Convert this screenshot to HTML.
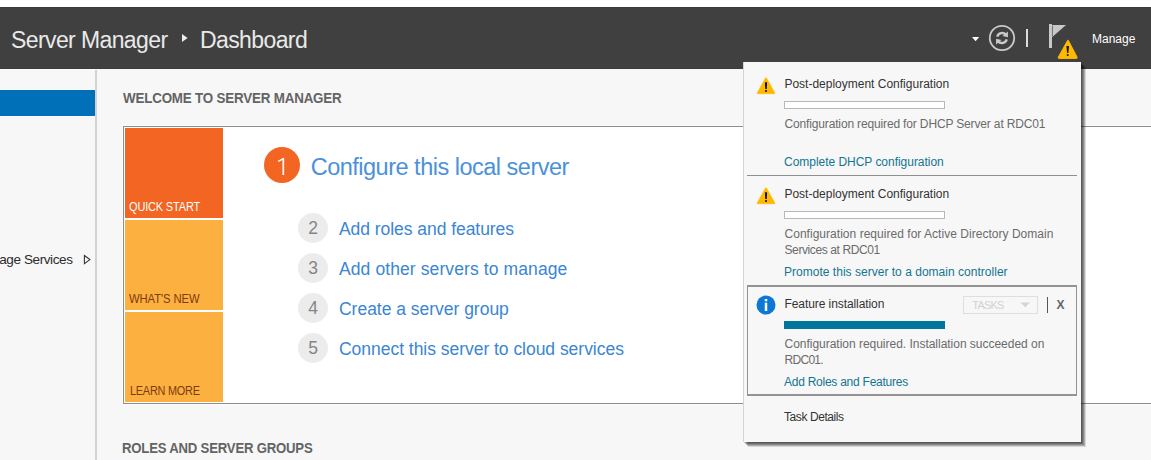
<!DOCTYPE html>
<html><head><meta charset="utf-8"><style>
html,body{margin:0;padding:0;width:1151px;height:460px;overflow:hidden;background:#ffffff;}
body{position:relative;font-family:"Liberation Sans", sans-serif;}
.t{position:absolute;white-space:nowrap;}
.b{position:absolute;}
</style></head><body>
<div class="b" style="left:0px;top:7px;width:1151px;height:62px;background:#404040;"></div>
<div class="b" style="left:0px;top:7px;width:1151px;height:1px;background:#3b3b3b;"></div>
<div class="b" style="left:0px;top:68px;width:1151px;height:1px;background:#3c3c3c;"></div>
<div class="t" style="left:11px;top:29.33px;font-size:23px;line-height:23px;color:#e9e9e9;font-weight:normal;letter-spacing:-0.6px;">Server Manager</div>
<svg class="b" style="left:180px;top:34px" width="10" height="10"><path d="M2 0.1 L7.6 4.1 L2 8.1 Z" fill="#ececec"/></svg>
<div class="t" style="left:200px;top:29.33px;font-size:23px;line-height:23px;color:#e9e9e9;font-weight:normal;letter-spacing:-0.6px;">Dashboard</div>
<svg class="b" style="left:970px;top:35px" width="12" height="8"><path d="M2 2 L9.2 2 L5.6 6.2 Z" fill="#ffffff"/></svg>
<svg class="b" style="left:986px;top:22px" width="32" height="32" viewBox="0 0 32 32">
<circle cx="16" cy="16" r="12.2" fill="none" stroke="#c9c9c9" stroke-width="1.8"/>
<g transform="translate(16 16) scale(0.87) translate(-16 -16)">
<path d="M10.5 14.5 A6 6 0 0 1 20.5 12" fill="none" stroke="#c9c9c9" stroke-width="2.8"/>
<path d="M22.8 8.6 L22.8 15.2 L16.6 13.6 Z" fill="#c9c9c9"/>
<path d="M21.5 17.5 A6 6 0 0 1 11.5 20" fill="none" stroke="#c9c9c9" stroke-width="2.8"/>
<path d="M9.2 23.4 L9.2 16.8 L15.4 18.4 Z" fill="#c9c9c9"/>
</g>
</svg>
<div class="b" style="left:1026px;top:29px;width:2px;height:18px;background:#dcdcdc;"></div>
<svg class="b" style="left:1046px;top:22px" width="34" height="40" viewBox="0 0 34 40">
<rect x="3" y="2" width="3" height="24" fill="#c8c8c8"/>
<path d="M6 3 L20 3 L6 15.2 Z" fill="#c8c8c8"/>
<rect x="6" y="3.5" width="0.9" height="11" fill="#6a6a6a"/>
<path d="M21.6 18.5 Q21.6 17.3 22.4 18.5 L31 35 Q31.6 36.4 30.4 36.4 L13 36.4 Q11.8 36.4 12.4 35 Z" fill="#ffb900" stroke="#ffb900" stroke-width="1" stroke-linejoin="round"/>
<path d="M20.4 24 L23 24 L22.3 31 L21.1 31 Z" fill="#111"/>
<rect x="20.8" y="32.2" width="1.8" height="1.7" fill="#111"/>
</svg>
<div class="t" style="left:1092px;top:32.54px;font-size:12px;line-height:12px;color:#ffffff;font-weight:normal;letter-spacing:0px;">Manage</div>
<div class="b" style="left:0px;top:69px;width:1151px;height:391px;background:#f7f7f7;"></div>
<div class="b" style="left:0px;top:69px;width:95px;height:1px;background:#fbfbfb;"></div>
<div class="b" style="left:0px;top:89px;width:95px;height:1px;background:#fdfdfd;"></div>
<div class="b" style="left:0px;top:90px;width:95px;height:26px;background:#0070b9;"></div>
<div class="b" style="left:0px;top:116px;width:95px;height:1px;background:#fdfdfd;"></div>
<div class="b" style="left:95px;top:70px;width:2px;height:390px;background:#d2d2d2;"></div>
<div class="t" style="right:1078.5px;top:253.37px;font-size:13.5px;line-height:13.5px;color:#2b2b2b;font-weight:normal;letter-spacing:-0.4px;">Manage Services</div>
<svg class="b" style="left:82px;top:253px" width="10" height="13"><path d="M2.4 2.5 L7.9 6.6 L2.4 10.7 Z" fill="none" stroke="#333" stroke-width="1.1"/></svg>
<div class="t" style="left:122.5px;top:91.15px;font-size:14px;line-height:14px;color:#646464;font-weight:bold;letter-spacing:-0.2px;transform:scaleX(0.956);transform-origin:0 0;">WELCOME TO SERVER MANAGER</div>
<div class="b" style="left:122px;top:125px;width:1100px;height:280px;background:#fcfcfc;"></div>
<div class="b" style="left:123px;top:126px;width:1100px;height:278px;background:#ffffff;border:1px solid #8e8e8e;box-sizing:border-box"></div>
<div class="b" style="left:125px;top:128px;width:98px;height:90px;background:#f26522;"></div>
<div class="b" style="left:125px;top:220px;width:98px;height:90px;background:#fbb040;"></div>
<div class="b" style="left:125px;top:312px;width:98px;height:90px;background:#fbb040;"></div>
<div class="t" style="left:129px;top:200.62px;font-size:12.5px;line-height:12.5px;color:#ffffff;font-weight:normal;letter-spacing:-0.2px;transform:scaleX(0.88);transform-origin:0 0;">QUICK START</div>
<div class="t" style="left:129.4px;top:292.62px;font-size:12.5px;line-height:12.5px;color:#7b3a12;font-weight:normal;letter-spacing:-0.1px;transform:scaleX(0.9);transform-origin:0 0;">WHAT'S NEW</div>
<div class="t" style="left:129.5px;top:384.62px;font-size:12.5px;line-height:12.5px;color:#7b3a12;font-weight:normal;letter-spacing:-0.25px;transform:scaleX(0.87);transform-origin:0 0;">LEARN MORE</div>
<div class="b" style="left:264px;top:147px;width:36px;height:36px;border-radius:50%;background:#f26522"></div>
<svg class="b" style="left:270px;top:150px" width="24" height="30"><path d="M13.3 8.2 L13.3 25" stroke="#fff" stroke-width="1.7" fill="none"/><path d="M13.9 8.3 L8.2 11.4" stroke="#fff" stroke-width="1.4" fill="none"/></svg>
<div class="t" style="left:310.7px;top:156.11px;font-size:23.5px;line-height:23.5px;color:#4b91da;font-weight:normal;letter-spacing:-0.5px;">Configure this local server</div>
<div class="b" style="left:298px;top:213px;width:30px;height:30px;border-radius:50%;background:#ececec"></div>
<div class="t" style="left:308.3px;top:220.09px;font-size:17.5px;line-height:17.5px;color:#858585;font-weight:normal;letter-spacing:0px;">2</div>
<div class="t" style="left:339px;top:220.59px;font-size:17.5px;line-height:17.5px;color:#3a86d4;font-weight:normal;letter-spacing:-0.05px;">Add roles and features</div>
<div class="b" style="left:298px;top:253px;width:30px;height:30px;border-radius:50%;background:#ececec"></div>
<div class="t" style="left:308.3px;top:260.09px;font-size:17.5px;line-height:17.5px;color:#858585;font-weight:normal;letter-spacing:0px;">3</div>
<div class="t" style="left:339px;top:260.59px;font-size:17.5px;line-height:17.5px;color:#3a86d4;font-weight:normal;letter-spacing:0.1px;">Add other servers to manage</div>
<div class="b" style="left:298px;top:293px;width:30px;height:30px;border-radius:50%;background:#ececec"></div>
<div class="t" style="left:308.3px;top:300.09px;font-size:17.5px;line-height:17.5px;color:#858585;font-weight:normal;letter-spacing:0px;">4</div>
<div class="t" style="left:339px;top:300.59px;font-size:17.5px;line-height:17.5px;color:#3a86d4;font-weight:normal;letter-spacing:-0.02px;">Create a server group</div>
<div class="b" style="left:298px;top:333px;width:30px;height:30px;border-radius:50%;background:#ececec"></div>
<div class="t" style="left:308.3px;top:340.09px;font-size:17.5px;line-height:17.5px;color:#858585;font-weight:normal;letter-spacing:0px;">5</div>
<div class="t" style="left:339px;top:340.59px;font-size:17.5px;line-height:17.5px;color:#3a86d4;font-weight:normal;letter-spacing:-0.03px;">Connect this server to cloud services</div>
<div class="t" style="left:122.4px;top:441.15px;font-size:14px;line-height:14px;color:#646464;font-weight:bold;letter-spacing:-0.2px;transform:scaleX(0.938);transform-origin:0 0;">ROLES AND SERVER GROUPS</div>
<div class="b" style="left:743px;top:62px;width:338px;height:380px;background:#f7f7f7;box-shadow:1px 1px 0 rgba(0,0,0,.16), 2px 2px 0 rgba(0,0,0,.22), 3px 3px 0 rgba(0,0,0,.2), 4px 4px 0 rgba(0,0,0,.2), 5px 5px 0.6px rgba(0,0,0,.13);border-left:1px solid #d4d4d4;box-sizing:border-box"></div>
<svg class="b" style="left:755px;top:76px" width="22" height="20" viewBox="0 0 22 20">
<path d="M10.6 1.9 Q11 1.2 11.4 1.9 L19.8 17 Q20.1 17.7 19.3 17.7 L2.7 17.7 Q1.9 17.7 2.2 17 Z" fill="#ffb900" stroke="#ffb900" stroke-width="0.7" stroke-linejoin="round"/>
<path d="M9.9 6.3 L12.1 6.3 L11.8 13 L10.2 13 Z" fill="#111"/>
<rect x="10.1" y="14.1" width="1.8" height="1.8" fill="#111"/>
</svg>
<div class="t" style="left:784.4px;top:77.84px;font-size:12px;line-height:12px;color:#333333;font-weight:normal;letter-spacing:0px;">Post-deployment Configuration</div>
<div class="b" style="left:784px;top:101px;width:161px;height:8px;background:#ffffff;border:1px solid #b9b9b9;box-sizing:border-box"></div>
<div class="t" style="left:784.5px;top:118.14px;font-size:12px;line-height:12px;color:#6b6b6b;font-weight:normal;letter-spacing:-0.15px;">Configuration required for DHCP Server at RDC01</div>
<div class="t" style="left:784px;top:155.54px;font-size:12px;line-height:12px;color:#147592;font-weight:normal;letter-spacing:-0.03px;">Complete DHCP configuration</div>
<div class="b" style="left:747px;top:175px;width:330px;height:1px;background:#8f8f8f;"></div>
<svg class="b" style="left:755px;top:186px" width="22" height="20" viewBox="0 0 22 20">
<path d="M10.6 1.9 Q11 1.2 11.4 1.9 L19.8 17 Q20.1 17.7 19.3 17.7 L2.7 17.7 Q1.9 17.7 2.2 17 Z" fill="#ffb900" stroke="#ffb900" stroke-width="0.7" stroke-linejoin="round"/>
<path d="M9.9 6.3 L12.1 6.3 L11.8 13 L10.2 13 Z" fill="#111"/>
<rect x="10.1" y="14.1" width="1.8" height="1.8" fill="#111"/>
</svg>
<div class="t" style="left:784.4px;top:187.84px;font-size:12px;line-height:12px;color:#333333;font-weight:normal;letter-spacing:0px;">Post-deployment Configuration</div>
<div class="b" style="left:784px;top:211px;width:161px;height:8px;background:#ffffff;border:1px solid #b9b9b9;box-sizing:border-box"></div>
<div class="t" style="left:784.5px;top:227.84px;font-size:12px;line-height:12px;color:#6b6b6b;font-weight:normal;letter-spacing:0.03px;">Configuration required for Active Directory Domain</div>
<div class="t" style="left:784.5px;top:244.04px;font-size:12px;line-height:12px;color:#6b6b6b;font-weight:normal;letter-spacing:-0.4px;">Services at RDC01</div>
<div class="t" style="left:784px;top:266.14px;font-size:12px;line-height:12px;color:#147592;font-weight:normal;letter-spacing:0.02px;">Promote this server to a domain controller</div>
<div class="b" style="left:747px;top:285px;width:330px;height:111px;background:transparent;border-style:solid;border-color:#939393;border-width:2px 1px 2px 1px;box-sizing:border-box"></div>
<svg class="b" style="left:756px;top:295px" width="20" height="20" viewBox="0 0 20 20">
<circle cx="10" cy="10" r="9.5" fill="#0a78d4"/>
<rect x="8.75" y="4" width="2.5" height="2.3" fill="#fff"/>
<rect x="8.75" y="7.7" width="2.5" height="8.3" fill="#fff"/>
</svg>
<div class="t" style="left:784.5px;top:297.64px;font-size:12px;line-height:12px;color:#333333;font-weight:normal;letter-spacing:-0.08px;">Feature installation</div>
<div class="b" style="left:784px;top:321px;width:161px;height:8px;background:#00779a;"></div>
<div class="b" style="left:963px;top:296px;width:75px;height:18px;background:transparent;border:1px solid #dedede;box-sizing:border-box"></div>
<div class="t" style="left:972.3px;top:300.29px;font-size:11px;line-height:11px;color:#d2d2d2;font-weight:normal;letter-spacing:-0.8px;">TASKS</div>
<svg class="b" style="left:1019px;top:301px" width="13" height="8"><path d="M1.5 1.5 L11 1.5 L6.25 6.3 Z" fill="#d4d4d4"/></svg>
<div class="b" style="left:1047px;top:297px;width:1.2px;height:16px;background:#555555;"></div>
<div class="t" style="left:1056.5px;top:299.14px;font-size:12px;line-height:12px;color:#666666;font-weight:bold;letter-spacing:0px;">X</div>
<div class="t" style="left:784.5px;top:338.24px;font-size:12px;line-height:12px;color:#6b6b6b;font-weight:normal;letter-spacing:-0.02px;">Configuration required. Installation succeeded on</div>
<div class="t" style="left:784.5px;top:354.04px;font-size:12px;line-height:12px;color:#6b6b6b;font-weight:normal;letter-spacing:-0.7px;">RDC01.</div>
<div class="t" style="left:784px;top:376.04px;font-size:12px;line-height:12px;color:#147592;font-weight:normal;letter-spacing:-0.25px;">Add Roles and Features</div>
<div class="t" style="left:784px;top:410.54px;font-size:12px;line-height:12px;color:#333333;font-weight:normal;letter-spacing:-0.42px;">Task Details</div>
</body></html>
